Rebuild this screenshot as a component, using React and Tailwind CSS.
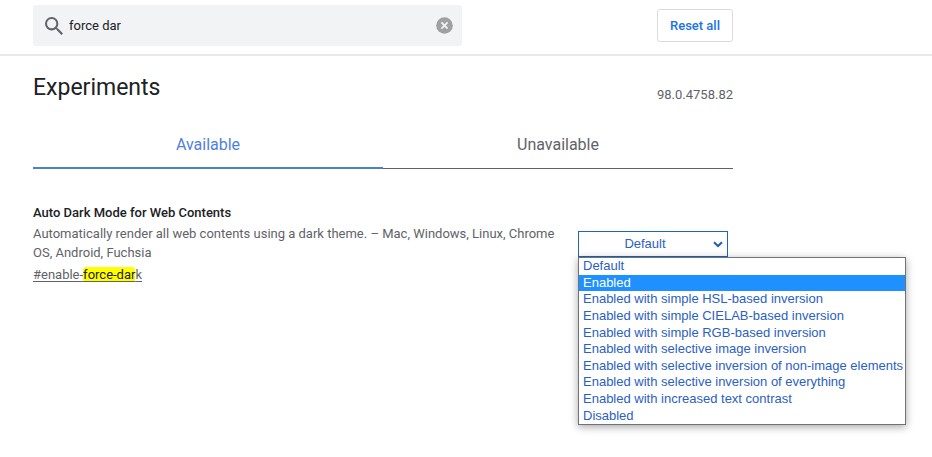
import { useState } from "react";

const OPTIONS = [
  "Default",
  "Enabled",
  "Enabled with simple HSL-based inversion",
  "Enabled with simple CIELAB-based inversion",
  "Enabled with simple RGB-based inversion",
  "Enabled with selective image inversion",
  "Enabled with selective inversion of non-image elements",
  "Enabled with selective inversion of everything",
  "Enabled with increased text contrast",
  "Disabled",
];

function SearchIcon() {
  return (
    <svg viewBox="3 3 17.49 17.49" className="size-[18px] shrink-0" fill="#5f6368" aria-hidden="true">
      <path d="M15.5 14h-.79l-.28-.27A6.471 6.471 0 0 0 16 9.5 6.5 6.5 0 1 0 9.5 16c1.61 0 3.09-.59 4.23-1.57l.27.28v.79l5 4.99L20.49 19l-4.99-5zm-6 0C7.01 14 5 11.99 5 9.5S7.01 5 9.5 5 14 7.01 14 9.5 11.99 14 9.5 14z" />
    </svg>
  );
}

function ClearIcon() {
  return (
    <svg viewBox="0 0 17 17" className="size-[17px]" aria-hidden="true">
      <circle cx="8.5" cy="8.5" r="8.3" fill="#9fa0a2" />
      <path d="M5.4 5.4 L11.6 11.6 M11.6 5.4 L5.4 11.6" stroke="#f1f3f4" strokeWidth="1.8" />
    </svg>
  );
}

function Header({ query, setQuery }) {
  return (
    <header className="border-b-2 border-[#e8e9ea] px-[33px] pt-[5px] pb-2">
      <div className="flex max-w-[700px] items-center justify-between">
        <div className="flex h-[41px] w-[429px] items-center rounded-[3px] bg-[#f1f3f4] pr-[9px] pl-3">
          <SearchIcon />
          <input
            type="text"
            aria-label="Search flags"
            value={query}
            onChange={(e) => setQuery(e.target.value)}
            className="ml-[6px] min-w-0 flex-1 bg-transparent text-[13px] text-[#202124] outline-none"
          />
          <button type="button" aria-label="Clear search" onClick={() => setQuery("")}>
            <ClearIcon />
          </button>
        </div>
        <button
          type="button"
          className="h-[33px] w-[76px] rounded-[3px] border border-[#dadce0] bg-white text-[13px] font-medium text-[#1a73e8]"
        >
          Reset all
        </button>
      </div>
    </header>
  );
}

function FlagSelect() {
  const [value, setValue] = useState("Default");
  return (
    <div className="relative w-[150px] shrink-0 font-['Liberation_Sans',Arial,sans-serif] text-[13px] text-[#2b60c4]">
      <select
        aria-label="Auto Dark Mode for Web Contents"
        value={value}
        onChange={(e) => setValue(e.target.value)}
        className="block h-[26px] w-full appearance-none border border-[#1e66b8] bg-white pr-4 [text-align-last:center] outline-none"
      >
        {OPTIONS.map((o) => (
          <option key={o}>{o}</option>
        ))}
      </select>
      <svg
        viewBox="0 0 10 7"
        className="pointer-events-none absolute top-[10px] right-[5px] h-[7px] w-[10px]"
        fill="none"
        stroke="#1e5fb8"
        strokeWidth="2"
        aria-hidden="true"
      >
        <path d="M1 1.2 L5 5 L9 1.2" />
      </svg>
      <ul
        role="listbox"
        aria-label="Options"
        className="absolute top-full left-0 flex h-[168px] w-[328px] flex-col border border-[#6f7276] bg-white shadow-[0_2px_8px_rgba(0,0,0,0.35)]"
      >
        {OPTIONS.map((o) => (
          <li
            key={o}
            role="option"
            aria-selected={o === "Enabled"}
            onClick={() => setValue(o)}
            className="flex flex-1 items-center px-1 leading-4 whitespace-nowrap aria-selected:bg-[#1e90ff] aria-selected:text-white"
          >
            {o}
          </li>
        ))}
      </ul>
    </div>
  );
}

export default function App() {
  const [query, setQuery] = useState("force dar");
  return (
    <div className="min-h-screen bg-white font-[Roboto,sans-serif] text-[13px] text-[#5f6368]">
      <Header query={query} setQuery={setQuery} />
      <main className="px-[33px] pt-4">
        <div className="max-w-[700px]">
          <div className="flex items-center justify-between">
            <h1 className="text-[23px] leading-8 text-[#202124]">Experiments</h1>
            <span className="pt-[14px] leading-[18px]">98.0.4758.82</span>
          </div>
          <div role="tablist" className="mt-5 flex text-base">
            <button
              type="button"
              role="tab"
              aria-selected="true"
              className="h-[45px] flex-1 border-b-2 border-[#4a80cf] pb-[2px] text-[#4f81dc]"
            >
              Available
            </button>
            <button
              type="button"
              role="tab"
              aria-selected="false"
              className="h-[45px] flex-1 border-b border-[#5f6368] pb-[2px]"
            >
              Unavailable
            </button>
          </div>
          <section className="mt-[34px] flex items-start justify-between pr-[5px]">
            <div className="max-w-[525px]">
              <h2 className="leading-5 font-medium text-[#202124]">Auto Dark Mode for Web Contents</h2>
              <p className="mt-px leading-[19px]">
                Automatically render all web contents using a dark theme. – Mac, Windows, Linux, Chrome OS, Android, Fuchsia
              </p>
              <a href="#enable-force-dark" className="mt-[3px] block leading-5 underline underline-offset-2">
                #enable-<mark className="rounded-[3px] bg-[#ff0] text-[#202124]">force-dar</mark>k
              </a>
            </div>
            <div className="pt-7">
              <FlagSelect />
            </div>
          </section>
        </div>
      </main>
    </div>
  );
}
